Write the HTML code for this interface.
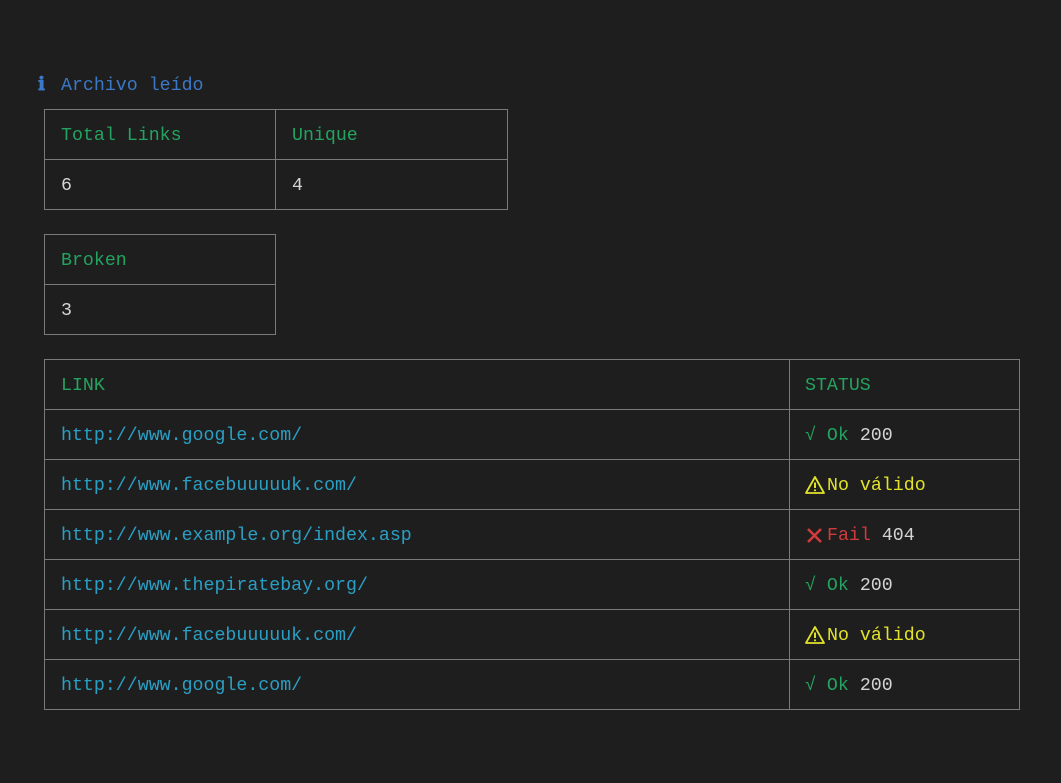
<!DOCTYPE html>
<html><head><meta charset="utf-8"><style>
body{margin:0;width:1061px;height:783px;background:#1e1e1e;overflow:hidden;position:relative;font-family:"Liberation Mono","DejaVu Sans Mono",monospace;font-size:18.27px;}
.t{position:absolute;line-height:25px;white-space:pre;height:25px}
.h{position:absolute;height:1px;background:#7a7a7a}
.v{position:absolute;width:1px;background:#7a7a7a}
.g{color:#23a35f}.b{color:#3b78c6}.w{color:#d4d4d4}.l{color:#2a9fc4}.y{color:#e2e22a}.r{color:#d23b3b}
.ic{position:absolute;left:805px;width:20px;height:20px}
</style></head><body>
<div class="t b" style="left:38px;top:74px;font-weight:bold">ℹ</div>
<div class="t b" style="left:61px;top:74px">Archivo leído</div>

<!-- table 1 -->
<div class="h" style="left:44px;width:464px;top:109px"></div>
<div class="h" style="left:44px;width:464px;top:159px"></div>
<div class="h" style="left:44px;width:464px;top:209px"></div>
<div class="v" style="left:44px;top:109px;height:101px"></div>
<div class="v" style="left:275px;top:109px;height:101px"></div>
<div class="v" style="left:507px;top:109px;height:101px"></div>
<div class="t g" style="left:61px;top:124px">Total Links</div>
<div class="t g" style="left:292px;top:124px">Unique</div>
<div class="t w" style="left:61px;top:174px">6</div>
<div class="t w" style="left:292px;top:174px">4</div>

<!-- table 2 -->
<div class="h" style="left:44px;width:232px;top:234px"></div>
<div class="h" style="left:44px;width:232px;top:284px"></div>
<div class="h" style="left:44px;width:232px;top:334px"></div>
<div class="v" style="left:44px;top:234px;height:101px"></div>
<div class="v" style="left:275px;top:234px;height:101px"></div>
<div class="t g" style="left:61px;top:249px">Broken</div>
<div class="t w" style="left:61px;top:299px">3</div>

<!-- table 3 -->
<div class="h" style="left:44px;width:976px;top:359px"></div>
<div class="h" style="left:44px;width:976px;top:409px"></div>
<div class="h" style="left:44px;width:976px;top:459px"></div>
<div class="h" style="left:44px;width:976px;top:509px"></div>
<div class="h" style="left:44px;width:976px;top:559px"></div>
<div class="h" style="left:44px;width:976px;top:609px"></div>
<div class="h" style="left:44px;width:976px;top:659px"></div>
<div class="h" style="left:44px;width:976px;top:709px"></div>
<div class="v" style="left:44px;top:359px;height:351px"></div>
<div class="v" style="left:789px;top:359px;height:351px"></div>
<div class="v" style="left:1019px;top:359px;height:351px"></div>

<div class="t g" style="left:61px;top:374px">LINK</div>
<div class="t g" style="left:805px;top:374px">STATUS</div>

<div class="t l" style="left:61px;top:424px">http://www.google.com/</div>
<div class="t" style="left:805px;top:424px"><span class="g">√ Ok</span> <span class="w">200</span></div>

<div class="t l" style="left:61px;top:474px">http://www.facebuuuuuk.com/</div>
<svg class="ic" style="top:475px" viewBox="0 0 20 20"><path d="M10 2 L19 18 H1 Z" fill="none" stroke="#e2e22a" stroke-width="1.8" stroke-linejoin="round"/><path d="M10 7.5V13" stroke="#e2e22a" stroke-width="2"/><circle cx="10" cy="15.3" r="1.1" fill="#e2e22a"/></svg>
<div class="t y" style="left:827px;top:474px">No válido</div>

<div class="t l" style="left:61px;top:524px">http://www.example.org/index.asp</div>
<svg class="ic" style="top:525px" viewBox="0 0 20 20"><path d="M3 4 L16 17 M16 4 L3 17" stroke="#d23b3b" stroke-width="2.6"/></svg>
<div class="t" style="left:827px;top:524px"><span class="r">Fail</span> <span class="w">404</span></div>

<div class="t l" style="left:61px;top:574px">http://www.thepiratebay.org/</div>
<div class="t" style="left:805px;top:574px"><span class="g">√ Ok</span> <span class="w">200</span></div>

<div class="t l" style="left:61px;top:624px">http://www.facebuuuuuk.com/</div>
<svg class="ic" style="top:625px" viewBox="0 0 20 20"><path d="M10 2 L19 18 H1 Z" fill="none" stroke="#e2e22a" stroke-width="1.8" stroke-linejoin="round"/><path d="M10 7.5V13" stroke="#e2e22a" stroke-width="2"/><circle cx="10" cy="15.3" r="1.1" fill="#e2e22a"/></svg>
<div class="t y" style="left:827px;top:624px">No válido</div>

<div class="t l" style="left:61px;top:674px">http://www.google.com/</div>
<div class="t" style="left:805px;top:674px"><span class="g">√ Ok</span> <span class="w">200</span></div>
</body></html>
